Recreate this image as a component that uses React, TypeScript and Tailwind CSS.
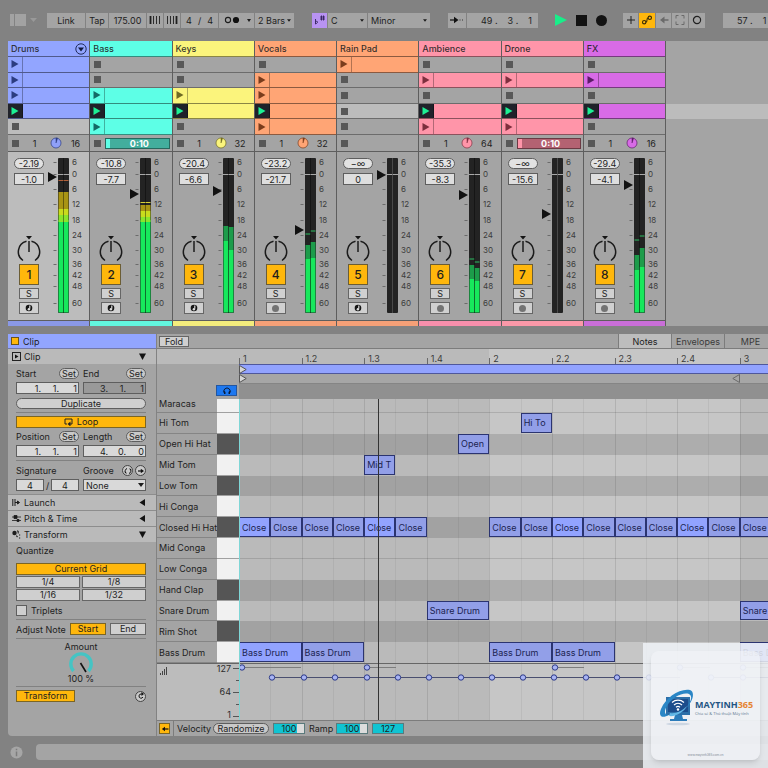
import type { ReactNode } from "react";
import clsx from "clsx";

type Slot = "stop" | "clip" | "playing" | "lit";

type Channel = {
  top: number;
  peak?: number;
  bright: number;
};

type Track = {
  name: string;
  head: string;
  strip: string;
  ink: string;
  fill: string;
  slots: Slot[];
  count?: string;
  timer?: { bar: string; done: string };
  peak: string;
  gain: string;
  fader: number;
  meter?: [Channel, Channel];
  hot?: { ochre: number; yellow: number; peak: number; peakColor: string };
  midi: boolean;
  selected?: boolean;
};

const TRACKS: Track[] = [
  {
    name: "Drums", head: "bg-[#92a5ff]", strip: "bg-[#8a98e6]", ink: "#2c3c80", fill: "#8fa0f8",
    slots: ["clip", "clip", "clip", "playing", "lit"], count: "16", peak: "-2.19", gain: "-1.0", fader: 25,
    meter: [{ top: 68, bright: 68 }, { top: 68, bright: 68 }],
    hot: { ochre: 40, yellow: 57, peak: 28, peakColor: "#b0603a" }, midi: true, selected: true,
  },
  {
    name: "Bass", head: "bg-[#5dffe6]", strip: "bg-[#62f5de]", ink: "#136a66", fill: "#5dffe6",
    slots: ["stop", "stop", "clip", "playing", "clip"], timer: { bar: "bg-[#42ae9d]", done: "bg-[#5dffe6]" },
    peak: "-10.8", gain: "-7.7", fader: 42, meter: [{ top: 68, bright: 68 }, { top: 68, bright: 68 }],
    hot: { ochre: 53, yellow: 59, peak: 50, peakColor: "#d8d03a" }, midi: true,
  },
  {
    name: "Keys", head: "bg-[#fbf47c]", strip: "bg-[#f3ec7c]", ink: "#6f6a22", fill: "#fbf47c",
    slots: ["stop", "stop", "clip", "playing", "stop"], count: "32", peak: "-20.4", gain: "-6.6", fader: 39,
    meter: [{ top: 74, bright: 89 }, { top: 75, bright: 98 }], midi: true,
  },
  {
    name: "Vocals", head: "bg-[#ffa575]", strip: "bg-[#f5a077]", ink: "#7a3c1c", fill: "#ffa575",
    slots: ["stop", "clip", "clip", "playing", "clip"], count: "32", peak: "-23.2", gain: "-21.7", fader: 78,
    meter: [{ top: 93, bright: 107, peak: 82 }, { top: 90, bright: 106, peak: 79 }], midi: false,
  },
  {
    name: "Rain Pad", head: "bg-[#ffa575]", strip: "bg-[#f5a077]", ink: "#7a3c1c", fill: "#ffa575",
    slots: ["clip", "stop", "stop", "lit", "stop"], peak: "−∞", gain: "0", fader: 23, midi: true,
  },
  {
    name: "Ambience", head: "bg-[#ff95a9]", strip: "bg-[#f88fac]", ink: "#7d2f3e", fill: "#ff95a9",
    slots: ["stop", "clip", "stop", "playing", "clip"], count: "64", peak: "-35.3", gain: "-8.3", fader: 43,
    meter: [{ top: 113, bright: 127, peak: 107 }, { top: 116, bright: 129, peak: 110 }], midi: false,
  },
  {
    name: "Drone", head: "bg-[#ff95a9]", strip: "bg-[#fb98a8]", ink: "#7d2f3e", fill: "#ff95a9",
    slots: ["stop", "clip", "stop", "playing", "clip"], timer: { bar: "bg-[#b46272]", done: "bg-[#ff95a9]" },
    peak: "−∞", gain: "-15.6", fader: 62, midi: false,
  },
  {
    name: "FX", head: "bg-[#d86be6]", strip: "bg-[#c96ed8]", ink: "#5d1c68", fill: "#d86be6",
    slots: ["stop", "clip", "stop", "playing", "stop"], count: "16", peak: "-29.4", gain: "-4.1", fader: 33,
    meter: [{ top: 103, bright: 118, peak: 88 }, { top: 96, bright: 115, peak: 84 }], midi: false,
  },
];

const SCALE: [string, number][] = [
  ["6", 10], ["0", 22], ["6", 37], ["12", 52], ["18", 68], ["24", 83],
  ["30", 98], ["36", 112], ["42", 123], ["48", 134], ["60", 151],
];

const PADS: [string, boolean][] = [
  ["Maracas", false], ["Hi Tom", false], ["Open Hi Hat", true], ["Mid Tom", false], ["Low Tom", true],
  ["Hi Conga", false], ["Closed Hi Hat", true], ["Mid Conga", false], ["Low Conga", false],
  ["Hand Clap", true], ["Snare Drum", false], ["Rim Shot", true], ["Bass Drum", false],
];

// label, pad row, first sixteenth, length, loud
const NOTES: [string, number, number, number, boolean][] = [
  ["Hi To", 2, 10, 1, false],
  ["Open", 3, 8, 1, false],
  ["Mid T", 4, 5, 1, false],
  ...[1, 2, 3, 4, 5, 6, 9, 10, 11, 12, 13, 14, 15, 16, 17].map(
    (c): [string, number, number, number, boolean] => ["Close", 7, c, 1, [1, 5, 11, 15].includes(c)]
  ),
  ["Snare Drum", 11, 7, 2, false],
  ["Snare Drum", 11, 17, 1, false],
  ["Bass Drum", 13, 1, 2, true],
  ["Bass Drum", 13, 3, 2, false],
  ["Bass Drum", 13, 9, 2, false],
  ["Bass Drum", 13, 11, 2, false],
  ["Bass Drum", 13, 17, 1, false],
];

const STEPS = Array.from({ length: 17 }, (_, i) => i);
const BEATS = ["1", "1.2", "1.3", "1.4", "2", "2.2", "2.3", "2.4", "3"];
const COLS = "grid w-[532px] grid-cols-[repeat(17,minmax(0,1fr))]";

const inSecondBar = (step: number) => step >= 8 && step < 16;

/* ---------- toolbar ---------- */

function Cell({ className, label, children }: { className?: string; label?: string; children: ReactNode }) {
  return (
    <button
      aria-label={label}
      className={clsx("flex h-[15px] items-center justify-center", className)}
    >
      {children}
    </button>
  );
}

function Caret({ className }: { className?: string }) {
  return (
    <svg viewBox="0 0 6 4" className={clsx("pointer-events-none absolute", className)}>
      <path d="M0 0h6L3 4z" fill="#1c1c1c" />
    </svg>
  );
}

function Picker({ label, value, className }: { label: string; value: string; className: string }) {
  return (
    <span className={clsx("relative flex h-[15px] shrink-0 bg-[#a4a4a4]", className)}>
      <select aria-label={label} className="w-full appearance-none bg-transparent pl-[3px] leading-none outline-none">
        <option>{value}</option>
      </select>
      <Caret className="top-[6px] right-[3px] h-[3px] w-1" />
    </span>
  );
}

function Bars({ heavy }: { heavy: boolean }) {
  return (
    <svg viewBox="0 0 12 10" className="h-[10px] w-3">
      {[1, 4, 7, 10].map((x, i) => (
        <path
          key={x}
          d={`M${x + 0.5} 1v8`}
          stroke="#1f1f1f"
          strokeWidth={(heavy ? i === 0 : i === 3) ? 1.8 : 0.9}
        />
      ))}
    </svg>
  );
}

const GREY = "shrink-0 bg-[#a4a4a4]";

function Toolbar() {
  return (
    <header className="flex h-10 items-center overflow-hidden pl-[10px]">
      <button aria-label="Browser" className="shrink-0">
        <svg viewBox="0 0 28 12" className="h-3 w-7">
          <path d="M0 0h4v12H0zM5 0h11v12H5z" fill="#a2a2a2" />
          <path d="M20 4h7l-3.500 4z" fill="#999" />
        </svg>
      </button>

      <div className="ml-[9px] flex gap-px">
        <Cell className={clsx("w-[38px]", GREY)}>Link</Cell>
        <Cell className={clsx("w-[22px]", GREY)}>Tap</Cell>
        <input aria-label="Tempo" defaultValue="175.00" className="h-[15px] w-[37px] bg-[#a4a4a4] text-center" />
        <Cell className={clsx("w-4", GREY)} label="Nudge down"><Bars heavy /></Cell>
        <Cell className={clsx("w-4", GREY)} label="Nudge up"><Bars heavy={false} /></Cell>
        <Cell className={clsx("w-[37px] gap-[6px]", GREY)} label="Time signature">
          <span>4</span><span>/</span><span>4</span>
        </Cell>
        <Cell className={clsx("w-[35px]", GREY)} label="Metronome">
          <svg viewBox="0 0 30 8" className="h-2 w-[30px]">
            <circle cx="6" cy="4" r="2.600" fill="none" stroke="#1c1c1c" strokeWidth="1.100" />
            <circle cx="14" cy="4" r="3.100" fill="#101010" />
            <path d="M25 3h4l-2 3z" fill="#1c1c1c" />
          </svg>
        </Cell>
        <Picker label="Quantization" value="2 Bars" className="w-[39px]" />
      </div>

      <div className="ml-[18px] flex gap-px">
        <Cell className="w-[15px] shrink-0 bg-[#b893f2]" label="Scale mode">
          <svg viewBox="0 0 12 12" className="size-3" fill="none" stroke="#33215c" strokeWidth=".9">
            <path d="M1.500 5v5c1.500-.6 2.200-1.400 2-2.200-.2-.7-1.300-.6-2 .1" />
            <path d="M7.500 1.500v5M9.500 1.500v5M6 3h5M6 5h5" />
          </svg>
        </Cell>
        <Picker label="Root note" value="C" className="w-[39px]" />
        <Picker label="Scale" value="Minor" className="w-[62px]" />
      </div>

      <div className="ml-[18px] flex gap-px">
        <Cell className={clsx("w-[18px]", GREY)} label="Follow">
          <svg viewBox="0 0 14 8" className="h-2 w-[14px]">
            <path d="M0 4h5" stroke="#111" strokeWidth="1.200" />
            <path d="M4 .8 8.500 4 4 7.200z" fill="#111" />
            <path d="M9.500 4h1M12 4h1" stroke="#333" strokeWidth="1" />
          </svg>
        </Cell>
        <Cell className={clsx("w-[71px] gap-[10px] pl-2", GREY)} label="Arrangement position">
          <span>49 .</span><span>3 .</span><span>1</span>
        </Cell>
      </div>

      <div className="ml-[17px] flex shrink-0 items-center gap-[9px]">
        <button aria-label="Play">
          <svg viewBox="0 0 12 12" className="size-3"><path d="M0 0l12 6-12 6z" fill="#18ee8a" /></svg>
        </button>
        <button aria-label="Stop" className="size-[11px] bg-[#121212]" />
        <button aria-label="Record" className="size-[11px] rounded-full bg-[#121212]" />
      </div>

      <div className="ml-4 flex gap-px">
        <Cell className={clsx("w-[15px]", GREY)} label="Overdub">
          <svg viewBox="0 0 10 10" className="size-[10px]"><path d="M5 1v8M1 5h8" stroke="#222" /></svg>
        </Cell>
        <Cell className="w-4 shrink-0 bg-[#ffb70c]" label="Automation arm">
          <svg viewBox="0 0 12 12" className="size-3" fill="none" stroke="#3b2c05" strokeWidth="1.100">
            <circle cx="3.200" cy="8.200" r="1.700" /><circle cx="8.800" cy="3.800" r="1.700" />
            <path d="M4.800 8.200c2.400 0 0-4.400 2.400-4.400" />
          </svg>
        </Cell>
        <Cell className={clsx("w-[15px]", GREY)} label="Re-enable automation">
          <svg viewBox="0 0 10 10" className="size-[10px]">
            <path d="M4 5h5.500" stroke="#6a6a6a" strokeWidth="1.500" /><path d="M5.500 1.500v7L1 5z" fill="#6a6a6a" />
          </svg>
        </Cell>
        <Cell className={clsx("w-4", GREY)} label="Capture">
          <svg viewBox="0 0 12 12" className="size-3" fill="none" stroke="#6a6a6a">
            <path d="M2 4.500v-3h2.500M7.500 1.500H10v3M10 7.500v3H7.500M4.500 10.500H2v-3" />
          </svg>
        </Cell>
        <Cell className={clsx("w-4", GREY)} label="Session record">
          <svg viewBox="0 0 10 10" className="size-[10px]"><circle cx="5" cy="5" r="3.600" fill="none" stroke="#222" strokeWidth="1.200" /></svg>
        </Cell>
      </div>

      <Cell className="ml-[18px] min-w-0 flex-1 justify-start! gap-[10px] bg-[#a4a4a4] pl-[14px]" label="Loop start">
        <span>57 .</span><span>1</span>
      </Cell>
    </header>
  );
}

/* ---------- session view ---------- */

function ClipSlot({ slot, track }: { slot: Slot; track: Track }) {
  if (slot === "stop" || slot === "lit") {
    return (
      <div className={clsx("flex items-center border-b border-[#6c6c6c] pl-1", slot === "lit" ? "bg-[#bcbcbc]" : "bg-[#a4a4a4]")}>
        <button aria-label={`Stop ${track.name}`} className="size-[7px] bg-[#585858]" />
      </div>
    );
  }
  const playing = slot === "playing";
  return (
    <div className={clsx("flex border-b border-black/45", track.head)}>
      <button
        aria-label={`Launch ${track.name} clip`}
        className={clsx("flex w-[15px] items-center justify-center border-r border-black/30", playing && "bg-[#20222a]")}
      >
        <svg viewBox="0 0 8 8" className="size-2">
          <path d="M.5 0 7.500 4 .5 8z" fill={playing ? "#1df094" : track.ink} />
        </svg>
      </button>
    </div>
  );
}

function Meter({ track }: { track: Track }) {
  const { meter, hot } = track;
  return (
    <svg viewBox="0 0 41 168" className="ml-[2px] h-[168px] w-[41px] shrink-0">
      {SCALE.map(([label, y]) => (
        <g key={y}>
          <path d={`M6.500 ${y + 0.5}h3`} stroke="#6b6b6b" />
          <text x="25" y={y + 3} fontSize="8" fill="#3c3c3c">{label}</text>
        </g>
      ))}
      <rect x="11" y="6" width="11" height="155" rx="1" fill="#232323" />
      {meter?.map((ch, i) => (
        <g key={i}>
          <rect x={11.5 + i * 5} y={ch.top} width="5" height={ch.bright - ch.top} fill="#1c9c4a" />
          <rect x={11.5 + i * 5} y={ch.bright} width="5" height={160.5 - ch.bright} fill="#17e85c" />
          {ch.peak && <path d={`M${11.5 + i * 5} ${ch.peak}h5`} stroke="#2cbf62" />}
        </g>
      ))}
      {hot && (
        <g>
          <rect x="11.500" y={hot.ochre} width="10" height={hot.yellow - hot.ochre} fill="#a99414" />
          <rect x="11.500" y={hot.yellow} width="10" height="6" fill="#c9dc1d" />
          <rect x="11.500" y={hot.yellow + 6} width="10" height={70 - hot.yellow - 6} fill="#8be52c" />
          <path d={`M11.500 ${hot.peak + 0.5}h10`} stroke={hot.peakColor} />
        </g>
      )}
      <path d="M11 22.500h11" stroke="#a9a9a9" />
      <path d="M16.500 6v155" stroke="#000" strokeOpacity=".4" />
      {!meter && <path d="M16.500 6v155" stroke="#6d6d6d" strokeOpacity=".6" />}
      <path d={`M1 ${track.fader - 5}l9 5-9 5z`} fill="#121212" />
    </svg>
  );
}

function TrackColumn({ track, index }: { track: Track; index: number }) {
  return (
    <section className="border-r border-[#5e5e5e]" aria-label={track.name}>
      <div className={clsx("flex h-4 items-center justify-between border-b border-black/45 pr-[2px] pl-[3px] font-medium", track.head)}>
        <span className="whitespace-nowrap text-[#222]/90">{track.name}</span>
        {track.selected && (
          <button aria-label="Fold group">
            <svg viewBox="0 0 12 12" className="size-3">
              <circle cx="6" cy="6" r="5.200" fill="none" stroke="#222c5c" />
              <path d="M3 4.500h6L6 8.500z" fill="#10183c" />
            </svg>
          </button>
        )}
      </div>

      <div className="grid h-[78px] grid-rows-5">
        {track.slots.map((slot, i) => <ClipSlot key={i} slot={slot} track={track} />)}
      </div>

      <div className="flex h-[17px] items-center border-b border-[#5e5e5e] bg-[#a4a4a4] pr-[2px] pl-1">
        <button aria-label={`Stop ${track.name} track`} className="size-[7px] shrink-0 bg-[#585858]" />
        {track.count && (
          <div className="flex flex-1 items-center text-[#222]">
            <span className="w-[31px] text-center">1</span>
            <svg viewBox="0 0 12 12" className="size-3">
              <circle cx="6" cy="6" r="5" fill={track.fill} stroke={track.ink} strokeOpacity=".7" />
              <path d="M6 6V1a5 5 0 0 1 1.600.3z" fill={track.ink} stroke={track.ink} strokeWidth=".5" />
            </svg>
            <span className="w-[27px] text-center">{track.count}</span>
          </div>
        )}
        {track.timer && (
          <div className={clsx("ml-1 flex h-[11px] flex-1 items-center border border-black/40 font-bold text-white", track.timer.bar)}>
            <span className={clsx("h-full w-1", track.timer.done)} />
            <span className="flex-1 text-center">0:10</span>
          </div>
        )}
      </div>

      <div className={clsx("flex h-[168px]", track.selected ? "bg-[#bcbcbc]" : "bg-[#a4a4a4]")}>
        <div className="flex w-[37px] shrink-0 flex-col items-center pt-[6px] pl-[5px]">
          <span className="flex h-[11px] w-[30px] items-center justify-center rounded-full border border-[#5e5e5e] bg-[#e2e2e2]">
            {track.peak}
          </span>
          <input
            aria-label={`${track.name} volume`}
            defaultValue={track.gain}
            className="mt-1 h-3 w-[30px] border border-[#5e5e5e] bg-[#dedede] text-center"
          />
          <svg viewBox="0 0 24 28" className="mt-[50px] h-7 w-6 shrink-0" role="img" aria-label="Pan">
            <path d="M9 1h6l-3 3.500z" fill="#151515" />
            <path
              d="M12 6v11M6 25.500A10.700 10.700 0 0 1 9.500 6.300M18 25.500A10.700 10.700 0 0 0 14.500 6.300"
              fill="none"
              stroke="#1b1b1b"
              strokeWidth="1.500"
            />
          </svg>
          <button className="mt-px h-[21px] w-5 shrink-0 border border-[#6b5d35] bg-[#ffb70c] text-xs font-medium">
            {index + 1}
          </button>
          <button aria-label={`Solo ${track.name}`} className="mt-[3px] h-[11px] w-5 shrink-0 border border-[#666] bg-[#d0d0d0] leading-[9px]">
            S
          </button>
          <button aria-label={`Arm ${track.name}`} className="mt-[3px] flex h-3 w-5 shrink-0 items-center justify-center border border-[#666] bg-[#d0d0d0]">
            {track.midi ? (
              <svg viewBox="0 0 8 8" className="size-2">
                <circle cx="4" cy="4" r="3.300" fill="#151515" />
                <path d="M4.800 1.500v3.300" stroke="#ddd" strokeWidth="1.200" />
                <circle cx="3.900" cy="5.200" r="1.200" fill="#ddd" />
              </svg>
            ) : (
              <span className="size-[7px] rounded-full bg-[#737373]" />
            )}
          </button>
        </div>
        <Meter track={track} />
      </div>

      <div className={clsx("h-[6px] border-t border-[#5e5e5e]", track.strip)} />
    </section>
  );
}

function Session() {
  return (
    <main className="ml-2 flex bg-[#a4a4a4]">
      <div className="grid w-[658px] shrink-0 grid-cols-8">
        {TRACKS.map((track, i) => <TrackColumn key={track.name} track={track} index={i} />)}
      </div>
      {/* empty drop area with the playing scene highlighted */}
      <div className="flex-1 pt-[63px]">
        <div className="h-[15px] bg-[#bcbcbc]" />
      </div>
    </main>
  );
}

/* ---------- clip panel ---------- */

function SetButton({ of }: { of: string }) {
  return (
    <button aria-label={`Set ${of}`} className="h-[11px] w-5 rounded-full border border-[#5e5e5e] bg-[#c9c9c9] leading-[9px]">
      Set
    </button>
  );
}

function Position({ label, values, dim }: { label: string; values: string[]; dim?: boolean }) {
  const id = label.toLowerCase();
  return (
    <div>
      <div className="flex h-[11px] items-center justify-between">
        <label htmlFor={id}>{label}</label>
        <SetButton of={label} />
      </div>
      <div className={clsx("mt-[3px] flex h-3 border border-[#5e5e5e]", dim ? "bg-[#999]" : "bg-[#d9d9d9]")}>
        {values.map((v, i) => (
          <input
            key={i}
            id={i === 0 ? id : undefined}
            aria-label={i === 0 ? undefined : `${label} ${i + 1}`}
            defaultValue={v}
            className={clsx("min-w-0 bg-transparent text-right", i === 0 ? "w-6" : "flex-1", i === 2 && "pr-px")}
          />
        ))}
      </div>
    </div>
  );
}

function SectionHead({ icon, title, open }: { icon: ReactNode; title: string; open?: boolean }) {
  return (
    <button className="flex h-[15px] w-full items-center bg-[#bababa] pr-[10px] pl-1 text-left">
      <svg viewBox="0 0 9 9" className="size-[9px]">{icon}</svg>
      <span className="ml-[3px] flex-1">{title}</span>
      <svg viewBox="0 0 7 7" className="size-[7px]">
        <path d={open ? "M0 .5h7L3.500 7z" : "M6 0v7L.5 3.500z"} fill="#121212" />
      </svg>
    </button>
  );
}

const BOX = "border border-[#666] bg-[#cfcfcf] h-3 leading-[10px]";
const HOT = "border border-[#7b6524] bg-[#ffb70c] h-3 leading-[10px]";
const RULE = "border-t border-[#818181]";
const ROUND = "flex size-[11px] items-center justify-center rounded-full border border-[#444] bg-[#c9c9c9]";

function ClipPanel() {
  return (
    <aside className="w-[148px] shrink-0 rounded-bl-sm bg-[#a4a4a4]" aria-label="Clip">
      <div className="flex h-[15px] items-center border-b border-[#7278a8] bg-[#92a5ff] pl-[3px]">
        <span className="size-2 border border-[#6b551b] bg-[#ffb70c]" />
        <span className="ml-1">Clip</span>
      </div>
      <SectionHead
        title="Clip"
        open
        icon={<><rect x=".5" y=".5" width="8" height="8" fill="none" stroke="#222" /><path d="M3 2.500l3.500 2L3 6.500z" fill="#111" /></>}
      />

      <div className="pt-1 pr-[10px] pb-[3px] pl-2">
        <div className="grid grid-cols-2 gap-1">
          <Position label="Start" values={["1.", "1.", "1"]} />
          <Position label="End" values={["3.", "1.", "1"]} dim />
        </div>
        <button className="mt-1 h-[11px] w-full rounded-full border border-[#5e5e5e] bg-[#cfcfcf] leading-[9px]">Duplicate</button>
        <div className={clsx("mt-[3px] pt-[3px]", RULE)}>
          <button className={clsx("flex w-full items-center justify-center gap-1", HOT)}>
            <svg viewBox="0 0 9 8" className="h-2 w-[9px]">
              <path d="M3 6H1V1h7v5H6" fill="none" stroke="#222" /><path d="M6.500 3.500v5L3.500 6z" fill="#222" />
            </svg>
            Loop
          </button>
        </div>
        <div className="mt-[3px] grid grid-cols-2 gap-1">
          <Position label="Position" values={["1.", "1.", "1"]} />
          <Position label="Length" values={["4.", "0.", "0"]} />
        </div>
        <div className={clsx("mt-[3px] grid grid-cols-2 gap-1 pt-1", RULE)}>
          <div>
            <label htmlFor="sig" className="flex h-[11px] items-center">Signature</label>
            <div className="mt-[3px] flex h-3 items-center justify-between">
              <input id="sig" defaultValue="4" className="h-3 w-7 border border-[#5e5e5e] bg-[#d9d9d9] text-center" />
              <span>/</span>
              <input aria-label="Signature denominator" defaultValue="4" className="h-3 w-7 border border-[#5e5e5e] bg-[#d9d9d9] text-center" />
            </div>
          </div>
          <div>
            <div className="flex h-[11px] items-center gap-[2px]">
              <label htmlFor="groove" className="flex-1">Groove</label>
              <button aria-label="Hot-swap groove" className={ROUND}>
                <svg viewBox="0 0 8 8" className="size-2" fill="none" stroke="#111">
                  <path d="M3 1.500A2.700 2.700 0 0 0 2 6M5 6.500A2.700 2.700 0 0 0 6 2" />
                  <path d="M.8 4.800 2.200 6.500M7.200 3.200 5.800 1.500" />
                </svg>
              </button>
              <button aria-label="Commit groove" className={ROUND}>
                <svg viewBox="0 0 8 8" className="size-2"><path d="M1 4h3" stroke="#111" strokeWidth="1.200" /><path d="M3.800 1.800v4.400L7 4z" fill="#111" /></svg>
              </button>
            </div>
            <div className="relative mt-[3px] flex h-3">
              <select id="groove" className="w-full appearance-none border border-[#5e5e5e] bg-[#d9d9d9] pl-[2px] leading-none">
                <option>None</option>
              </select>
              <Caret className="top-1 right-[2px] h-1 w-[6px]" />
            </div>
          </div>
        </div>
      </div>

      <div className="flex flex-col gap-px border-t border-[#8d8d8d] bg-[#8d8d8d]">
        <SectionHead title="Launch" icon={<path d="M.8 1v7M3 1v7M5.500 3l2 1.500-2 1.500zM3 4.500h3" stroke="#1c1c1c" fill="#1c1c1c" />} />
        <SectionHead title="Pitch & Time" icon={<path d="M0 3h9M0 6.500h9M2 1.500h3v3H2zM5 5.500h2v2H5z" stroke="#1c1c1c" strokeWidth=".8" fill="#1c1c1c" />} />
        <SectionHead
          title="Transform"
          open
          icon={<><circle cx="2.500" cy="3" r="2.200" fill="#1c1c1c" /><path d="M5 1h1.200v2.500M4 6h1.200v1.200M7 5h1.200M7 8h1.200" stroke="#1c1c1c" fill="none" /></>}
        />
      </div>

      <div className="pt-[3px] pr-[10px] pb-[34px] pl-2">
        <p className="flex h-[11px] items-center">Quantize</p>
        <div className="mt-[7px] grid grid-cols-2 gap-x-[2px] gap-y-px">
          <button className={clsx("col-span-2", HOT)}>Current Grid</button>
          {["1/4", "1/8", "1/16", "1/32"].map((g) => <button key={g} className={BOX}>{g}</button>)}
        </div>
        <label className="mt-1 flex items-center gap-1">
          <input type="checkbox" className="size-[11px] appearance-none border border-[#5e5e5e] bg-[#cfcfcf]" />
          Triplets
        </label>
        <div className={clsx("mt-[3px] flex items-center gap-1 pt-[3px]", RULE)}>
          <span className="flex-1 whitespace-nowrap">Adjust Note</span>
          <button className={clsx("w-9", HOT)}>Start</button>
          <button className={clsx("w-9", BOX)}>End</button>
        </div>
        <div className={clsx("mt-[3px] flex flex-col items-center pt-[2px]", RULE)}>
          <span className="flex h-[11px] items-center">Amount</span>
          <svg viewBox="0 1 26 21" className="h-[21px] w-[26px]" role="img" aria-label="Amount 100 %">
            <path d="M5.500 20A10.200 10.200 0 1 1 20.500 20" fill="none" stroke="#45c4c4" strokeWidth="3.400" />
            <path d="M12.500 12l5.500 9" stroke="#121212" strokeWidth="1.600" />
          </svg>
          <span className="flex h-[11px] items-center">100 %</span>
        </div>
        <div className={clsx("mt-[2px] flex items-center justify-between pt-[3px]", RULE)}>
          <button className={clsx("w-[59px]", HOT)}>Transform</button>
          <button aria-label="Reset" className={ROUND}>
            <svg viewBox="0 0 8 8" className="size-2"><path d="M5 2H4a2.100 2.100 0 1 0 2 3" fill="none" stroke="#111" /><path d="M4.500 0v4L7 2z" fill="#111" /></svg>
          </button>
        </div>
      </div>
    </aside>
  );
}

/* ---------- note editor ---------- */

const PAD_GRID = "grid h-[264px] grid-rows-[14px_repeat(12,minmax(0,1fr))]";

function PadList() {
  return (
    <div className={PAD_GRID}>
      {PADS.map(([name, black], i) => (
        <div key={name} className="flex">
          <span
            className={clsx(
              "flex w-[60px] border-b border-[#858585] pl-[2px] whitespace-nowrap",
              i === 0 ? "items-start" : "items-center"
            )}
          >
            {name}
          </span>
          <button
            aria-label={`Preview ${name}`}
            className={clsx("flex-1 border-b border-[#a0a0a0]", black ? "bg-[#555]" : "bg-[#f1f1f1]")}
          />
        </div>
      ))}
    </div>
  );
}

function StepShade({ rows }: { rows: string }) {
  return STEPS.map((s) => (
    <div
      key={s}
      style={{ gridColumn: s + 1, gridRow: rows }}
      className={clsx(
        "border-l",
        s % 2 ? "border-black/5" : "border-black/10",
        !inSecondBar(s) && "bg-black/6"
      )}
    />
  ));
}

function NoteGrid() {
  return (
    <div className={clsx(COLS, PAD_GRID)}>
      {PADS.map(([name, black], i) => (
        <div
          key={name}
          style={{ gridColumn: "1 / -1", gridRow: i + 1 }}
          className={clsx(black ? "bg-[#adadad]" : "bg-[#c6c6c6]", (i === 0 || i === 7) && "border-b border-[#adadad]")}
        />
      ))}
      <StepShade rows="1 / -1" />
      {NOTES.map(([label, row, start, length, loud]) => (
        <div
          key={`${row}-${start}`}
          style={{ gridColumn: `${start} / span ${length}`, gridRow: row }}
          className={clsx(
            "mb-px flex items-center overflow-hidden border border-[#2b3470] pl-[2px] whitespace-nowrap text-[#1b2350]",
            loud ? "bg-[#92a3ff]" : "bg-[#929fe8]"
          )}
        >
          {label}
        </div>
      ))}
    </div>
  );
}

const LOW = [33, 65, 96, 128, 159, 190, 222, 253, 284, 315, 347, 378, 410, 472, 504];
const HIGH: [number, number][] = [[3, 62], [128, 157], [316, 345], [441, 471], [504, 532]];

function VelocityLane() {
  return (
    <div className="relative h-[57px] border-t border-[#666] bg-[#c6c6c6]">
      <div className={clsx(COLS, "h-full")}><StepShade rows="1" /></div>
      <svg viewBox="0 0 532 56" className="absolute top-0 left-0 h-14 w-[532px]">
        {HIGH.map(([x, end]) => <path key={x} d={`M${x} 3.500H${end}`} stroke="#7d7d7d" />)}
        <path d="M33 13.500H441M472 13.500H532" stroke="#4a4f70" />
        {HIGH.map(([x]) => <circle key={x} cx={x} cy="3.500" r="2.700" fill="#a8b4f4" stroke="#2d3a86" />)}
        {LOW.map((x) => <circle key={x} cx={x} cy="13.500" r="2.700" fill="#a8b4f4" stroke="#2d3a86" />)}
      </svg>
    </div>
  );
}

function Flag({ hollow }: { hollow?: boolean }) {
  return (
    <svg viewBox="0 0 8 9" className="h-[9px] w-2 shrink-0">
      {hollow ? (
        <path d="M7.500 .5v8L.8 4.500z" fill="none" stroke="#6a6a6a" />
      ) : (
        <path d="M.5 .5v8l6.700-4z" fill="#d6d6d6" stroke="#555" />
      )}
    </svg>
  );
}

function Timeline() {
  return (
    <div className="relative min-w-0 flex-1 overflow-hidden">
      <div className={clsx(COLS, "h-[15px] bg-[#c6c6c6]")}>
        {BEATS.map((b, i) => (
          <span
            key={b}
            className={clsx(
              "flex items-end text-[#3a3a3a]",
              i < 8 ? "col-span-2" : "col-span-1",
              (i < 4 || i === 8) && "bg-black/6"
            )}
          >
            <span className="mr-[3px] h-[6px] w-px bg-[#6a6a6a]" />
            <span className="pb-px">{b}</span>
          </span>
        ))}
      </div>
      <div className="flex h-[10px] border-y border-[#4f589c] bg-[#92a3ff]"><Flag /></div>
      <div className="h-[10px] border-b border-[#858585] bg-[#a6a6a6]">
        <div className="flex w-[501px] justify-between"><Flag /><Flag hollow /></div>
      </div>
      <div className="h-[15px] bg-[#909090]" />
      <NoteGrid />
      <VelocityLane />
      {/* clip start and playhead */}
      <span className="absolute top-[50px] bottom-0 left-0 w-px bg-[#7fd6d6]" />
      <span className="absolute top-[50px] bottom-0 left-[139px] w-px bg-[#333]" />
    </div>
  );
}

function Amount({ label, value, full }: { label: string; value: string; full?: boolean }) {
  return (
    <input
      aria-label={label}
      defaultValue={value}
      className={clsx(
        "h-[11px] w-8 border border-[#5a7a7c] text-center",
        full ? "bg-[#10c4d2]" : "bg-linear-to-r from-[#10c4d2] from-78% to-[#dcdcdc] to-78%"
      )}
    />
  );
}

function NoteEditor() {
  return (
    <section className="ml-px min-w-0 flex-1 bg-[#a4a4a4]" aria-label="Notes">
      <div className="flex h-[15px] items-center border-b border-[#7c7c7c] pl-[2px]">
        <button className="h-[11px] w-[30px] border border-[#666] bg-[#cfcfcf] leading-[9px]">Fold</button>
        <nav className="ml-auto flex h-full">
          <button className="w-[54px] border-x border-[#7c7c7c] bg-[#bdbdbd]">Notes</button>
          <button className="w-[53px] border-r border-[#7c7c7c] text-[#3a3a3a]">Envelopes</button>
          <button className="w-[43px] pl-2 text-[#3a3a3a]">MPE</button>
        </nav>
      </div>

      <div className="flex">
        <div className="w-[82px] shrink-0">
          <div className="h-[15px] bg-[#bababa]" />
          <div className="flex h-[35px] items-end justify-end pr-[2px] pb-[3px]">
            <button aria-label="Preview pads" className="flex h-[11px] w-[21px] items-center justify-center border border-[#2356a0] bg-[#1d78f0]">
              <svg viewBox="0 0 10 9" className="h-[9px] w-[10px]">
                <path d="M2.500 7.500A3.300 3.300 0 1 1 7.500 7.500" fill="none" stroke="#0c1c38" />
                <path d="M2 4.500v3.500h1.500V6zM8 4.500v3.500H6.500V6z" fill="#0c1c38" />
              </svg>
            </button>
          </div>
          <PadList />
          <div className="flex h-[57px] justify-between border-t border-[#666] bg-[#bcbcbc] pl-[3px]">
            <svg viewBox="0 0 8 10" className="mt-[2px] h-[10px] w-2">
              <path d="M.5 7v2M2.500 5v4M4.500 3v6M6.500 1v8" stroke="#444" />
            </svg>
            <div className="flex">
              <div className="flex flex-col justify-between pb-px text-right text-[#2c2c2c]">
                <span>127</span><span>64</span><span>1</span>
              </div>
              <svg viewBox="0 0 8 56" className="h-14 w-2">
                <path d="M2 4.500h6M2 28.500h6M2 52.500h6M5 16.500h3M5 40.500h3" stroke="#555" />
              </svg>
            </div>
          </div>
        </div>
        <Timeline />
      </div>

      <div className="flex h-4 items-center border-t border-[#7c7c7c] pl-[2px]">
        <button aria-label="Hide lane" className="flex size-[11px] items-center justify-center border border-[#7b6524] bg-[#ffb70c]">
          <svg viewBox="0 0 8 6" className="h-[6px] w-2"><path d="M3 3h4.500" stroke="#111" strokeWidth="1.200" /><path d="M4 .8v4.400L.8 3z" fill="#111" /></svg>
        </button>
        <span className="ml-[3px] h-full w-px bg-[#7c7c7c]" />
        <span className="ml-[3px] w-9">Velocity</span>
        <button className="h-[11px] w-14 rounded-full border border-[#5e5e5e] bg-[#c9c9c9] leading-[9px]">Randomize</button>
        <span className="ml-1 flex items-center gap-1">
          <Amount label="Randomize amount" value="100" />
          <span className="w-[23px]">Ramp</span>
          <Amount label="Ramp start" value="100" />
          <Amount label="Ramp end" value="127" full />
        </span>
      </div>
    </section>
  );
}

/* ---------- site badge ---------- */

function Badge() {
  return (
    <div className="absolute right-0 bottom-0 size-[125px] bg-[#eef2f7]/85 p-2">
      <div className="flex h-full flex-col items-center rounded-lg bg-[#f3f5f8]/60 shadow-md">
        <div className="mt-[37px] flex items-center gap-px">
          <svg viewBox="0 0 36 38" className="h-[38px] w-9 shrink-0">
            <ellipse cx="20" cy="36" rx="12" ry="1.300" fill="#ccd6e2" />
            <path d="M8 9h24v18H8z" fill="#2d6fa8" />
            <path d="M10 11h20v13H10z" fill="#1c4d8c" />
            <path d="M17 27h7l1 4h4v2H12v-2h4z" fill="#2c7cba" />
            <path d="M32 2C22 0 8 9 3 21c-3 7 1 10 8 6-5 0-5-4-2-9C14 10 24 4 31 6c4 2 2 8-3 14 6-5 10-16 4-18z" fill="#2a86c6" />
            <path d="M12 25c6 1 12-2 17-7-3 6-11 11-18 10z" fill="#63b8e6" />
            <path d="M14 14.500a9 9 0 0 1 12 0M16 17a6 6 0 0 1 8 0M18 19.300a3 3 0 0 1 4 0" fill="none" stroke="#fff" strokeWidth="1.200" />
            <circle cx="20" cy="21.500" r="1.200" fill="#fff" />
          </svg>
          <div className="flex flex-col font-['Open_Sans',sans-serif] whitespace-nowrap">
            <span className="text-[9px] leading-[13px] font-bold text-[#1f5583]">
              MAYTINH<span className="text-[#e58432]">365</span>
            </span>
            <span className="text-[4px] leading-[6px] text-[#5c7890]">Chia sẻ &amp; Thủ thuật Máy tính</span>
          </div>
        </div>
        <span className="mt-auto mb-[3px] text-[3px] text-[#7d8894]">www.maytinh365.com.vn</span>
      </div>
    </div>
  );
}

export default function App() {
  return (
    <div className="relative min-h-screen overflow-hidden bg-[#828282] font-[Inter,sans-serif] text-[9px] leading-none text-[#1e1e1e]">
      <Toolbar />
      <div className="pt-px">
        <Session />
      </div>
      <div className="mt-2 ml-2 flex">
        <ClipPanel />
        <NoteEditor />
      </div>
      <footer className="mt-2 flex items-center pb-2 pl-[10px]">
        <svg viewBox="0 0 14 14" className="size-[13px]">
          <circle cx="7" cy="7" r="6.500" fill="#a6a6a6" />
          <path d="M7 3v1.500M7 6v5" stroke="#7c7c7c" strokeWidth="1.600" />
        </svg>
        <div className="ml-[13px] h-4 flex-1 rounded-l-sm bg-[#a4a4a4]" />
      </footer>
      <Badge />
    </div>
  );
}
